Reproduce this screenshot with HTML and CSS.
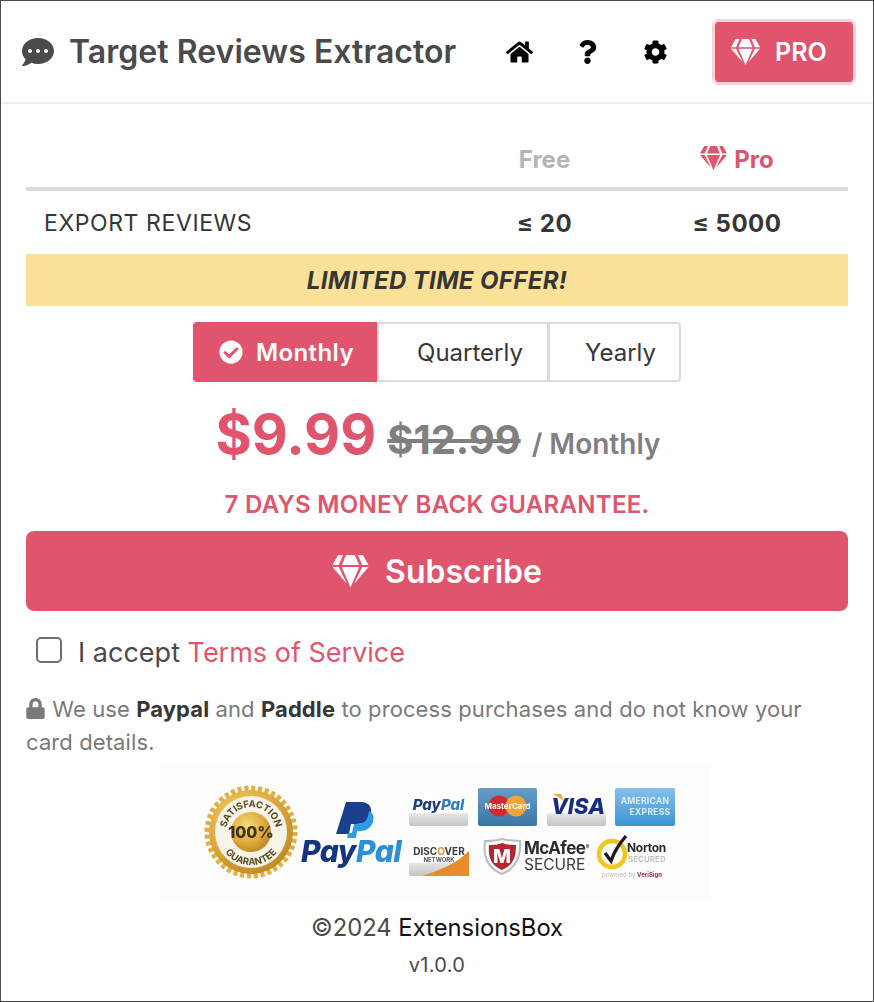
FILE: index.html
```html
<!DOCTYPE html>
<html lang="en">
<head>
    <meta charset="UTF-8">
    <title>Target Reviews Extractor</title>
    <link rel="stylesheet" href="styles.css">
</head>
<body>
    <svg class="icon-defs" aria-hidden="true">
        <symbol id="i-comment" viewBox="0 0 512 512"><path d="M256 32C114.6 32 0 125.1 0 240c0 49.6 21.4 95 57 130.7C44.5 421.1 2.7 466 2.2 466.5c-2.2 2.3-2.8 5.7-1.5 8.7S4.8 480 8 480c66.3 0 116-31.8 140.6-51.4 32.7 12.3 69 19.4 107.4 19.4 141.4 0 256-93.1 256-208S397.4 32 256 32zM128 272c-17.7 0-32-14.3-32-32s14.3-32 32-32 32 14.3 32 32-14.3 32-32 32zm128 0c-17.7 0-32-14.3-32-32s14.3-32 32-32 32 14.3 32 32-14.3 32-32 32zm128 0c-17.7 0-32-14.3-32-32s14.3-32 32-32 32 14.3 32 32-14.3 32-32 32z"/></symbol>
        <symbol id="i-home" viewBox="0 0 576 512"><path d="M280.37 148.26L96 300.11V464a16 16 0 0 0 16 16l112.06-.29a16 16 0 0 0 15.92-16V368a16 16 0 0 1 16-16h64a16 16 0 0 1 16 16v95.64a16 16 0 0 0 16 16.05L464 480a16 16 0 0 0 16-16V300L295.67 148.26a12.19 12.19 0 0 0-15.3 0zM571.6 251.47L488 182.56V44.05a12 12 0 0 0-12-12h-56a12 12 0 0 0-12 12v72.61L318.47 43a48 48 0 0 0-61 0L4.34 251.47a12 12 0 0 0-1.6 16.9l25.5 31A12 12 0 0 0 45.15 301l235.22-193.74a12.19 12.19 0 0 1 15.3 0L530.9 301a12 12 0 0 0 16.9-1.6l25.5-31a12 12 0 0 0-1.7-16.93z"/></symbol>
        <symbol id="i-question" viewBox="0 0 384 512"><path d="M202.021 0C122.202 0 70.503 32.703 29.914 91.026c-7.363 10.58-5.093 25.086 5.178 32.874l43.138 32.709c10.373 7.865 25.132 6.026 33.253-4.148 25.049-31.381 43.63-49.449 82.757-49.449 30.764 0 68.816 19.799 68.816 49.631 0 22.552-18.617 34.134-48.993 51.164-35.423 19.86-82.299 44.576-82.299 106.405V320c0 13.255 10.745 24 24 24h72.471c13.255 0 24-10.745 24-24v-5.773c0-42.86 125.268-44.645 125.268-160.627C377.504 66.256 286.902 0 202.021 0zM192 373.459c-38.196 0-69.271 31.075-69.271 69.271 0 38.195 31.075 69.27 69.271 69.27s69.271-31.075 69.271-69.271-31.075-69.27-69.271-69.27z"/></symbol>
        <symbol id="i-cog" viewBox="0 0 512 512"><path d="M487.4 315.7l-42.6-24.6c4.3-23.2 4.3-47 0-70.2l42.6-24.6c4.9-2.8 7.1-8.6 5.5-14-11.1-35.6-30-67.8-54.7-94.6-3.8-4.1-10-5.1-14.8-2.3L380.8 110c-17.9-15.4-38.5-27.3-60.8-35.1V25.8c0-5.6-3.9-10.5-9.4-11.7-36.7-8.2-74.3-7.8-109.2 0-5.5 1.2-9.4 6.1-9.4 11.7V75c-22.2 7.9-42.8 19.8-60.8 35.1L88.7 85.5c-4.9-2.8-11-1.9-14.8 2.3-24.7 26.7-43.6 58.9-54.7 94.6-1.7 5.4.6 11.2 5.5 14L67.3 221c-4.3 23.2-4.3 47 0 70.2l-42.6 24.6c-4.9 2.8-7.1 8.6-5.5 14 11.1 35.6 30 67.8 54.7 94.6 3.8 4.1 10 5.1 14.8 2.3l42.6-24.6c17.9 15.4 38.5 27.3 60.8 35.1v49.2c0 5.6 3.9 10.5 9.4 11.7 36.7 8.2 74.3 7.8 109.2 0 5.5-1.2 9.4-6.1 9.4-11.7v-49.2c22.2-7.9 42.8-19.8 60.8-35.1l42.6 24.6c4.9 2.8 11 1.9 14.8-2.3 24.7-26.7 43.6-58.9 54.7-94.6 1.5-5.5-.7-11.3-5.6-14.1zM256 336c-44.1 0-80-35.9-80-80s35.9-80 80-80 80 35.9 80 80-35.9 80-80 80z"/></symbol>
        <symbol id="i-gem" viewBox="0 0 576 512"><path d="M485.5 0L576 160H474.9L405.7 0h79.8zm-128 0l69.2 160H149.3L218.5 0h139zm-267 0h79.8l-69.2 160H0L90.5 0zM0 192h100.7l123 251.7c1.5 3.1-2.7 5.9-5 3.3L0 192zm148.2 0h279.6l-137 318.2c-1 2.4-4.5 2.4-5.5 0L148.2 192zm204.1 251.7l123-251.7H576L357.3 446.9c-2.3 2.7-6.5-.1-5-3.2z"/></symbol>
        <symbol id="i-check" viewBox="0 0 512 512"><path d="M504 256c0 136.967-111.033 248-248 248S8 392.967 8 256 119.033 8 256 8s248 111.033 248 248zM227.314 387.314l184-184c6.248-6.248 6.248-16.379 0-22.627l-22.627-22.627c-6.248-6.249-16.379-6.249-22.628 0L216 308.118l-70.059-70.059c-6.248-6.248-16.379-6.248-22.628 0l-22.627 22.627c-6.248 6.248-6.248 16.379 0 22.627l104 104c6.249 6.249 16.379 6.249 22.628.001z"/></symbol>
        <symbol id="i-lock" viewBox="0 0 448 512"><path d="M400 224h-24v-72C376 68.2 307.8 0 224 0S72 68.2 72 152v72H48c-26.5 0-48 21.5-48 48v192c0 26.5 21.5 48 48 48h352c26.5 0 48-21.5 48-48V272c0-26.5-21.5-48-48-48zm-104 0H152v-72c0-39.7 32.3-72 72-72s72 32.3 72 72v72z"/></symbol>
    </svg>

    <div class="popup">
        <header class="topbar">
            <svg class="title-icon"><use href="#i-comment"/></svg>
            <h1 class="title">Target Reviews Extractor</h1>
            <nav class="topnav">
                <a href="#" class="nav-link link-home"><svg class="nav-icon"><use href="#i-home"/></svg></a>
                <a href="#" class="nav-link link-help"><svg class="nav-icon"><use href="#i-question"/></svg></a>
                <a href="#" class="nav-link link-cog"><svg class="nav-icon"><use href="#i-cog"/></svg></a>
            </nav>
            <a href="#" class="pro-btn"><svg class="pro-gem"><use href="#i-gem"/></svg>PRO</a>
        </header>

        <main class="content">
            <div class="plan-head">
                <span></span>
                <span class="col-free">Free</span>
                <span class="col-pro"><svg class="pro-mini"><use href="#i-gem"/></svg>Pro</span>
            </div>
            <div class="plan-row">
                <span class="row-name">EXPORT REVIEWS</span>
                <span class="row-val val-free">≤ 20</span>
                <span class="row-val val-pro">≤ 5000</span>
            </div>

            <div class="offer">LIMITED TIME OFFER!</div>

            <div class="periods">
                <button class="period is-active"><svg class="period-check"><use href="#i-check"/></svg>Monthly</button>
                <button class="period period-q">Quarterly</button>
                <button class="period period-y">Yearly</button>
            </div>

            <div class="price">
                <span class="price-now">$9.99</span>
                <s class="price-old">$12.99</s>
                <span class="price-per">/ Monthly</span>
            </div>

            <p class="guarantee">7 DAYS MONEY BACK GUARANTEE.</p>

            <button class="subscribe"><svg class="subscribe-gem"><use href="#i-gem"/></svg>Subscribe</button>

            <label class="accept">
                <input type="checkbox" class="accept-box">
                <span>I accept <a href="#">Terms of Service</a></span>
            </label>

            <p class="secure-note">
                <svg class="lock"><use href="#i-lock"/></svg>
                We use <b>Paypal</b> and <b>Paddle</b> to process purchases and do not know your card details.
            </p>

            <!-- payment badges -->
            <svg class="badges" viewBox="160 765 550 135" role="img" aria-label="Payment and security badges">
                <defs>
                    <radialGradient id="gold" cx="40%" cy="35%" r="75%">
                        <stop offset="0" stop-color="#f8dc7c"/>
                        <stop offset="0.6" stop-color="#dca73a"/>
                        <stop offset="1" stop-color="#b57f1e"/>
                    </radialGradient>
                    <linearGradient id="silver" x1="0" y1="0" x2="0" y2="1">
                        <stop offset="0" stop-color="#fff"/>
                        <stop offset="0.62" stop-color="#fff"/>
                        <stop offset="0.64" stop-color="#e4e4e4"/>
                        <stop offset="1" stop-color="#c4c4c4"/>
                    </linearGradient>
                    <linearGradient id="mcblue" x1="0" y1="0" x2="0" y2="1">
                        <stop offset="0" stop-color="#679cc6"/>
                        <stop offset="1" stop-color="#3a76a6"/>
                    </linearGradient>
                    <linearGradient id="amexblue" x1="0" y1="0" x2="0" y2="1">
                        <stop offset="0" stop-color="#86c1ea"/>
                        <stop offset="1" stop-color="#3c93d3"/>
                    </linearGradient>
                    <path id="seal-top" d="M226 832a25 25 0 0 1 50 0"/>
                    <path id="seal-bot" d="M218 832a33 33 0 0 0 66 0"/>
                </defs>
                <rect x="160" y="765" width="550" height="135" fill="#fdfdfd"/>

                <g class="seal">
                    <circle cx="251" cy="832" r="43" fill="none" stroke="#e2ae3e" stroke-width="7" stroke-dasharray="4 2.75"/>
                    <circle cx="251" cy="832" r="42" fill="url(#gold)"/>
                    <circle cx="251" cy="832" r="36" fill="#f7f3e8"/>
                    <circle cx="251" cy="832" r="20" fill="url(#gold)"/>
                    <text class="seal-text"><textPath href="#seal-top" startOffset="50%" text-anchor="middle">SATISFACTION</textPath></text>
                    <text class="seal-text"><textPath href="#seal-bot" startOffset="50%" text-anchor="middle">GUARANTEE</textPath></text>
                    <text x="251" y="838" class="seal-num">100%</text>
                </g>

                <g class="pp-mark">
                    <path d="M346 802h15c8 0 11 5 10 11-2 8-7 11-15 11h-5l-2 10h-13z" fill="#1b3f8f"/>
                    <path d="M369 811c5 2 5 7 4 11-2 6-7 9-13 9h-3l-1 7h-9l1-5h4l2-9h5c6 0 9-5 10-13z" fill="#2d9ce0"/>
                </g>
                <text x="301" y="862" class="pp-word"><tspan fill="#16357f">Pay</tspan><tspan fill="#2b90d8">Pal</tspan></text>

                <g>
                    <rect x="409" y="792" width="59" height="34" rx="2" fill="url(#silver)"/>
                    <text x="438.5" y="810" class="card-pp"><tspan fill="#1e3f7c">Pay</tspan><tspan fill="#2f7fc0">Pal</tspan></text>

                    <rect x="478" y="788" width="59" height="38" rx="2" fill="url(#mcblue)"/>
                    <circle cx="499" cy="806" r="10.5" fill="#d6282f"/>
                    <circle cx="516" cy="806" r="10.5" fill="#f0a53a"/>
                    <text x="507.5" y="809" class="card-mc">MasterCard</text>

                    <rect x="547" y="792" width="59" height="34" rx="2" fill="url(#silver)"/>
                    <path d="M552 794h9l3 8c-3-4-7-6-12-8z" fill="#e9a83a"/>
                    <text x="578" y="814" class="card-visa">VISA</text>

                    <rect x="615" y="788" width="60" height="38" rx="2" fill="url(#amexblue)"/>
                    <text x="645" y="804" class="card-amex">AMERICAN</text>
                    <text x="650" y="815" class="card-amex">EXPRESS</text>

                    <rect x="409" y="841" width="60" height="35" rx="2" fill="url(#silver)"/>
                    <path d="M422 876c20-6 36-14 47-25v25z" fill="#e88a2e"/>
                    <text x="439" y="855" class="card-disc">DISC<tspan fill="#e88a2e">O</tspan>VER</text>
                    <text x="439" y="862" class="card-net">NETWORK</text>
                </g>

                <g>
                    <path d="M485 841c10 0 14-1 17-2 4 1 8 2 18 2 1 15-3 27-18 33-15-6-19-18-17-33z" fill="#fff" stroke="#b9bcc0" stroke-width="2"/>
                    <path d="M489 845c7 0 11-1 13-2 3 1 6 2 14 2 0 11-2 20-14 25-12-5-14-14-13-25z" fill="#b5272f"/>
                    <text x="502" y="863" class="mcafee-m">M</text>
                    <text x="524" y="854" class="mcafee-name">McAfee<tspan class="mcafee-reg" dy="-5">®</tspan></text>
                    <text x="524" y="870" class="mcafee-sec">SECURE</text>
                </g>

                <g>
                    <circle cx="612" cy="854" r="13" fill="none" stroke="#f3c61d" stroke-width="4.5"/>
                    <path d="M605 853l6 8c3-9 8-17 15-25" fill="none" stroke="#1b1b1b" stroke-width="3.4"/>
                    <text x="627" y="852" class="norton">Norton</text>
                    <text x="628" y="862" class="norton-sec">SECURED</text>
                    <text x="602" y="877" class="norton-by">powered by <tspan fill="#a3304f" font-weight="700">VeriSign</tspan></text>
                </g>
            </svg>

            <p class="copy">©2024 <a href="#">ExtensionsBox</a></p>
            <p class="version">v1.0.0</p>
        </main>
    </div>
</body>
</html>
```

FILE: styles.css
```css
* {
    box-sizing: border-box;
}

body {
    margin: 0;
    font-family: Inter, "Liberation Sans", sans-serif;
    color: #363636;
    background-color: white;
}

a {
    text-decoration: none;
}

.icon-defs {
    display: none;
}

.popup {
    width: 874px;
    height: 1002px;
    border: 1px solid #4a4a4a;
    overflow: hidden;
}

/* top bar */
.topbar {
    display: flex;
    align-items: center;
    height: 103px;
    padding: 0 20px 0 21px;
    border-bottom: 2px solid #eeeeee;
}

.title-icon {
    width: 32px;
    height: 32px;
    fill: #4a4a4a;
    flex: none;
}

.title {
    margin: 0 0 0 15px;
    font-size: 32px;
    font-weight: 600;
    letter-spacing: 0.04px;
    color: #4a4a4a;
    white-space: nowrap;
}

.topnav {
    display: flex;
    align-items: center;
    margin-left: auto;
}

.nav-link {
    display: flex;
}

.nav-icon {
    width: 27px;
    height: 24px;
    fill: black;
}

.link-help {
    margin-left: 41px;
}

.link-cog {
    margin-left: 41px;
}

.pro-btn {
    display: flex;
    align-items: center;
    width: 138px;
    height: 60px;
    margin-left: 46px;
    padding-left: 16px;
    font-size: 25px;
    font-weight: 600;
    color: white;
    background-color: #e0556d;
    border-radius: 4px;
    box-shadow: 0 0 0 3px #f9d3da;
}

.pro-gem {
    width: 29px;
    height: 26px;
    fill: white;
    margin-right: 15px;
}

/* plan table */
.content {
    padding: 0 25px;
}

.plan-head,
.plan-row {
    display: grid;
    grid-template-columns: 437px 163px 1fr;
    align-items: center;
    text-align: center;
    font-weight: 700;
}

.plan-head {
    height: 87px;
    padding-top: 27px;
    font-size: 24px;
    border-bottom: 4px solid #dbdbdb;
}

.col-free {
    color: #b5b5b5;
}

.col-pro {
    display: flex;
    align-items: center;
    justify-content: center;
    color: #e0556d;
}

.pro-mini {
    width: 27px;
    height: 24px;
    fill: #e0556d;
    margin-right: 7px;
    margin-top: -3px;
}

.plan-row {
    height: 63px;
    padding-top: 1px;
    font-size: 24px;
    letter-spacing: 0.5px;
}

.row-name {
    text-align: left;
    padding-left: 18px;
    font-size: 23px;
    font-weight: 400;
    letter-spacing: 0.6px;
}

.offer {
    height: 52px;
    line-height: 54px;
    text-align: center;
    font-size: 24px;
    font-weight: 700;
    font-style: italic;
    letter-spacing: 0.35px;
    background-color: #fbe198;
}

/* billing period */
.periods {
    display: flex;
    justify-content: center;
    margin-top: 16px;
}

.period {
    height: 60px;
    font-family: inherit;
    font-size: 24px;
    color: #363636;
    background-color: white;
    border: 2px solid #dbdbdb;
    padding: 0;
}

.period + .period {
    margin-left: -1px;
}

.period.is-active {
    display: flex;
    align-items: center;
    justify-content: center;
    width: 185px;
    padding-left: 2px;
    font-weight: 600;
    letter-spacing: 0.4px;
    color: white;
    background-color: #e0556d;
    border-color: #e0556d;
    border-radius: 4px 0 0 4px;
}

.period-q {
    width: 172px;
    padding-left: 14px;
}

.period-y {
    width: 133px;
    padding-left: 12px;
    border-radius: 0 4px 4px 0;
}

.period-check {
    width: 24px;
    height: 24px;
    fill: white;
    margin-right: 13px;
}

/* price */
.price {
    display: flex;
    justify-content: center;
    align-items: baseline;
    height: 88px;
    padding-top: 18px;
    padding-left: 2px;
    font-weight: 700;
    color: #808080;
}

.price-now {
    font-size: 55.5px;
    color: #e0556d;
}

.price-old {
    margin-left: 11px;
    font-size: 40px;
}

.price-per {
    margin-left: 11px;
    font-size: 28px;
    font-weight: 600;
}

.guarantee {
    margin: 0;
    height: 61px;
    padding-top: 20px;
    text-align: center;
    font-size: 24px;
    font-weight: 600;
    letter-spacing: 0.3px;
    color: #e0556d;
    white-space: nowrap;
}

.subscribe {
    display: flex;
    align-items: center;
    justify-content: center;
    width: 100%;
    height: 80px;
    font-family: inherit;
    font-size: 32px;
    font-weight: 600;
    color: white;
    background-color: #e0556d;
    border: none;
    border-radius: 8px;
}

.subscribe-gem {
    width: 37px;
    height: 32px;
    fill: white;
    margin-right: 16px;
}

.accept {
    display: flex;
    align-items: center;
    height: 40px;
    margin-top: 21px;
    padding-left: 10px;
    font-size: 27px;
    color: #4a4a4a;
}

.accept a {
    color: #e0556d;
}

.accept-box {
    appearance: none;
    width: 26px;
    height: 26px;
    margin: -4px 16px 0 0;
    border: 2px solid #6e6e6e;
    border-radius: 5px;
    background-color: white;
}

.secure-note {
    margin: 21px 0 0;
    font-size: 22px;
    line-height: 33px;
    letter-spacing: 0.1px;
    color: #7a7a7a;
}

.secure-note b {
    font-weight: 700;
    color: #363636;
}

.lock {
    width: 19px;
    height: 21px;
    margin-right: 1px;
    fill: #7a7a7a;
    vertical-align: -2px;
}

.badges {
    display: block;
    width: 550px;
    height: 135px;
    margin: 6px 0 0 134px;
    filter: blur(0.4px);
}

/* badge labels */
.seal-text {
    font-size: 9.5px;
    font-weight: 700;
    fill: #5a4a22;
}

.seal-num {
    font-size: 16px;
    font-weight: 800;
    text-anchor: middle;
    fill: #3e3418;
}

.pp-word {
    font-size: 30px;
    font-weight: 800;
    font-style: italic;
    letter-spacing: -0.5px;
}

.card-pp {
    font-size: 15px;
    font-weight: 800;
    font-style: italic;
    text-anchor: middle;
}

.card-mc {
    font-size: 8px;
    font-weight: 700;
    fill: white;
    text-anchor: middle;
}

.card-visa {
    font-size: 22px;
    font-weight: 800;
    font-style: italic;
    fill: #1a2c82;
    text-anchor: middle;
}

.card-amex {
    font-size: 8.5px;
    font-weight: 700;
    letter-spacing: 0.3px;
    fill: #d8edf9;
    text-anchor: middle;
}

.card-disc {
    font-size: 10px;
    font-weight: 700;
    fill: #3a3a3a;
    text-anchor: middle;
}

.card-net {
    font-size: 6px;
    font-weight: 700;
    fill: #555555;
    text-anchor: middle;
}

.mcafee-m {
    font-size: 19px;
    font-weight: 800;
    fill: white;
    text-anchor: middle;
}

.mcafee-name {
    font-size: 17px;
    font-weight: 700;
    fill: #2b2b2b;
    letter-spacing: -0.5px;
}

.mcafee-reg {
    font-size: 6px;
}

.mcafee-sec {
    font-size: 15.5px;
    fill: #3c3c3c;
}

.norton {
    font-size: 12px;
    font-weight: 700;
    fill: #2b2b2b;
    letter-spacing: -0.3px;
}

.norton-sec {
    font-size: 8px;
    font-weight: 600;
    fill: #bdbdbd;
}

.norton-by {
    font-size: 6px;
    fill: #c4b6ba;
}

.copy {
    margin: 13px 0 0;
    text-align: center;
    font-size: 23.8px;
    color: #4a4a4a;
}

.copy a {
    color: #111111;
}

.version {
    margin: 11px 0 0;
    text-align: center;
    font-size: 20px;
    letter-spacing: 0.3px;
    color: #4a4a4a;
}
```
